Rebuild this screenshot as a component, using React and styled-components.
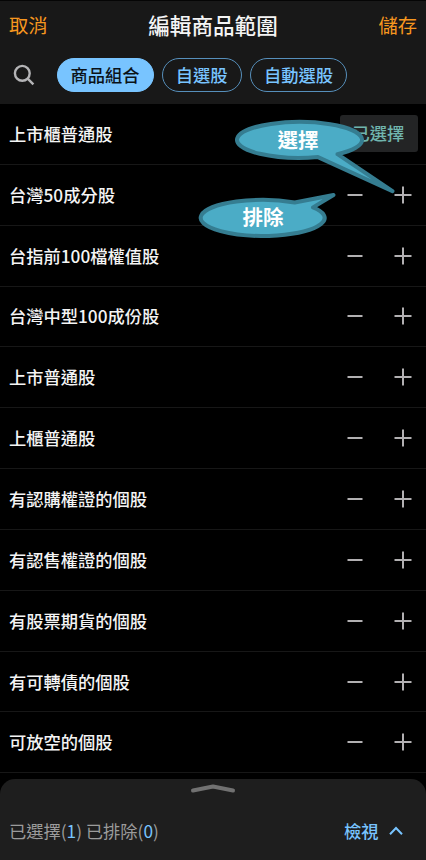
import React from "react";
import styled, { createGlobalStyle } from "styled-components";

const GlobalStyle = createGlobalStyle`
  *, *::before, *::after {
    box-sizing: border-box;
  }

  body {
    margin: 0;
    background: #000;
    font-family: "Noto Sans CJK TC", sans-serif;
    font-weight: 500;
  }

  button {
    font: inherit;
    color: inherit;
    background: none;
    border: none;
    padding: 0;
  }
`;

const Screen = styled.div`
  position: relative;
  display: flex;
  flex-direction: column;
  width: 426px;
  height: 860px;
  overflow: hidden;
  background: #000;
  color: #f4f4f4;
`;

const Header = styled.header`
  flex: none;
  height: 104px;
  background: #181818;
  border-top: 1px solid #050505;
`;

const TitleBar = styled.div`
  display: flex;
  align-items: center;
  justify-content: space-between;
  height: 49px;
  padding: 0 9px 2px;
`;

const Title = styled.h1`
  margin: 0;
  font-size: 21.6px;
  font-weight: 500;
  line-height: 32px;
`;

const TextButton = styled.button`
  font-size: 19.3px;
  font-weight: 400;
  line-height: 30px;
  color: #f7971f;
`;

const FilterBar = styled.div`
  display: flex;
  align-items: center;
  height: 50px;
  padding-left: 13px;
`;

const SearchButton = styled.button`
  display: flex;
  width: 43.5px;
  color: #b4b4b6;
`;

const Chip = styled.button`
  height: 34px;
  margin-right: 8.3px;
  padding: 0 13px;
  border: 1px solid ${(props) => (props.$active ? "#78c4ff" : "#568fbb")};
  border-radius: 17px;
  background: ${(props) => (props.$active ? "#78c4ff" : "transparent")};
  color: ${(props) => (props.$active ? "#0b1218" : "#78c4ff")};
  font-size: 17.25px;
  line-height: 32px;
`;

const List = styled.ul`
  flex: none;
  margin: 0;
  padding: 0;
  list-style: none;
`;

const Row = styled.li`
  display: flex;
  align-items: center;
  justify-content: space-between;
  height: 60.85px;
  padding: 0 8.5px 0 9px;
  border-bottom: 1px solid #171717;
  font-size: 17.25px;
`;

const Name = styled.span`
  padding-bottom: 1px;
`;

const Actions = styled.div`
  display: flex;
  align-items: center;
  gap: 30.5px;
  padding-right: 6px;
  color: #b2b0b2;
`;

const ActionButton = styled.button`
  display: flex;
`;

const SelectedTag = styled.span`
  width: 78px;
  height: 37px;
  margin-bottom: 1px;
  border-radius: 3px;
  background: #232425;
  color: #70b5ae;
  line-height: 36px;
  text-align: center;
`;

const BottomSheet = styled.footer`
  display: flex;
  flex-direction: column;
  align-items: center;
  height: 81px;
  margin-top: auto;
  padding: 4px 23px 0 9px;
  border-radius: 15px 15px 0 0;
  background: #1e1e1e;
`;

const SheetRow = styled.div`
  display: flex;
  align-items: center;
  justify-content: space-between;
  width: 100%;
  margin-top: 24px;
  font-size: 17.25px;
  line-height: 26px;
`;

const Handle = styled.svg`
  flex: none;
  margin-left: 14px;
`;

const Summary = styled.span`
  color: #9b9b9b;
  font-weight: 400;
`;

const Count = styled.span`
  color: #78c4ff;
`;

const ViewButton = styled.button`
  display: flex;
  align-items: center;
  gap: 10.5px;
  color: #78c4ff;
`;

// Callouts float over the list and point at the row buttons
const CalloutLayer = styled.svg`
  position: absolute;
  top: 0;
  left: 0;
  pointer-events: none;

  path {
    fill: #4bacc6;
    stroke: #357d91;
    stroke-width: 4;
    stroke-linejoin: round;
  }

  text {
    fill: #fff;
    font-size: 20.5px;
    font-weight: 700;
    text-anchor: middle;
  }
`;

const filters = ["商品組合", "自選股", "自動選股"];

const groups = [
  { name: "上市櫃普通股", selected: true },
  { name: "台灣50成分股" },
  { name: "台指前100檔權值股" },
  { name: "台灣中型100成份股" },
  { name: "上市普通股" },
  { name: "上櫃普通股" },
  { name: "有認購權證的個股" },
  { name: "有認售權證的個股" },
  { name: "有股票期貨的個股" },
  { name: "有可轉債的個股" },
  { name: "可放空的個股" },
];

const SearchIcon = () => (
  <svg width="22" height="22" viewBox="0 0 22 22" fill="none" stroke="currentColor" strokeWidth="2.4">
    <circle cx="9.3" cy="9.3" r="7.4" />
    <path d="M14.4 14.4L20.4 20.4" />
  </svg>
);

const MinusIcon = () => (
  <svg width="16" height="18" viewBox="0 0 16 18" stroke="currentColor" strokeWidth="2">
    <path d="M0.5 9H15.5" />
  </svg>
);

const PlusIcon = () => (
  <svg width="18" height="18" viewBox="0 0 18 18" stroke="currentColor" strokeWidth="2">
    <path d="M0.5 9H17.5M9 0.5V17.5" />
  </svg>
);

const GroupRow = ({ name, selected }) => (
  <Row>
    <Name>{name}</Name>
    {selected ? (
      <SelectedTag>已選擇</SelectedTag>
    ) : (
      <Actions>
        <ActionButton aria-label="排除">
          <MinusIcon />
        </ActionButton>
        <ActionButton aria-label="選擇">
          <PlusIcon />
        </ActionButton>
      </Actions>
    )}
  </Row>
);

const Callouts = () => (
  <CalloutLayer width="426" height="260" viewBox="0 0 426 260">
    <path d="M337.5 154.2L392.5 191.2L318 157.1A62.5 18 0 1 1 337.5 154.2Z" />
    <text x="298" y="148">選擇</text>
    <path d="M294.7 202.5L333.5 195L313 207.4A62 18 0 1 1 294.7 202.5Z" />
    <text x="263" y="225">排除</text>
  </CalloutLayer>
);

const App = () => (
  <>
    <GlobalStyle />
    <Screen>
      <Header>
        <TitleBar>
          <TextButton>取消</TextButton>
          <Title>編輯商品範圍</Title>
          <TextButton>儲存</TextButton>
        </TitleBar>
        <FilterBar>
          <SearchButton aria-label="搜尋">
            <SearchIcon />
          </SearchButton>
          {filters.map((filter, index) => (
            <Chip key={filter} $active={index === 0}>
              {filter}
            </Chip>
          ))}
        </FilterBar>
      </Header>
      <List>
        {groups.map((group) => (
          <GroupRow key={group.name} {...group} />
        ))}
      </List>
      <BottomSheet>
        <Handle width="46" height="11" viewBox="0 0 46 11" fill="none" stroke="#717171" strokeWidth="4">
          <path d="M3 7.5L23 3.5L43 7.5" strokeLinecap="round" strokeLinejoin="round" />
        </Handle>
        <SheetRow>
          <Summary>
            已選擇(<Count>1</Count>) 已排除(<Count>0</Count>)
          </Summary>
          <ViewButton>
            檢視
            <svg width="14" height="10" viewBox="0 0 14 10" fill="none" stroke="currentColor" strokeWidth="2">
              <path d="M1 8.2L7 2L13 8.2" />
            </svg>
          </ViewButton>
        </SheetRow>
      </BottomSheet>
      <Callouts />
    </Screen>
  </>
);

export default App;
